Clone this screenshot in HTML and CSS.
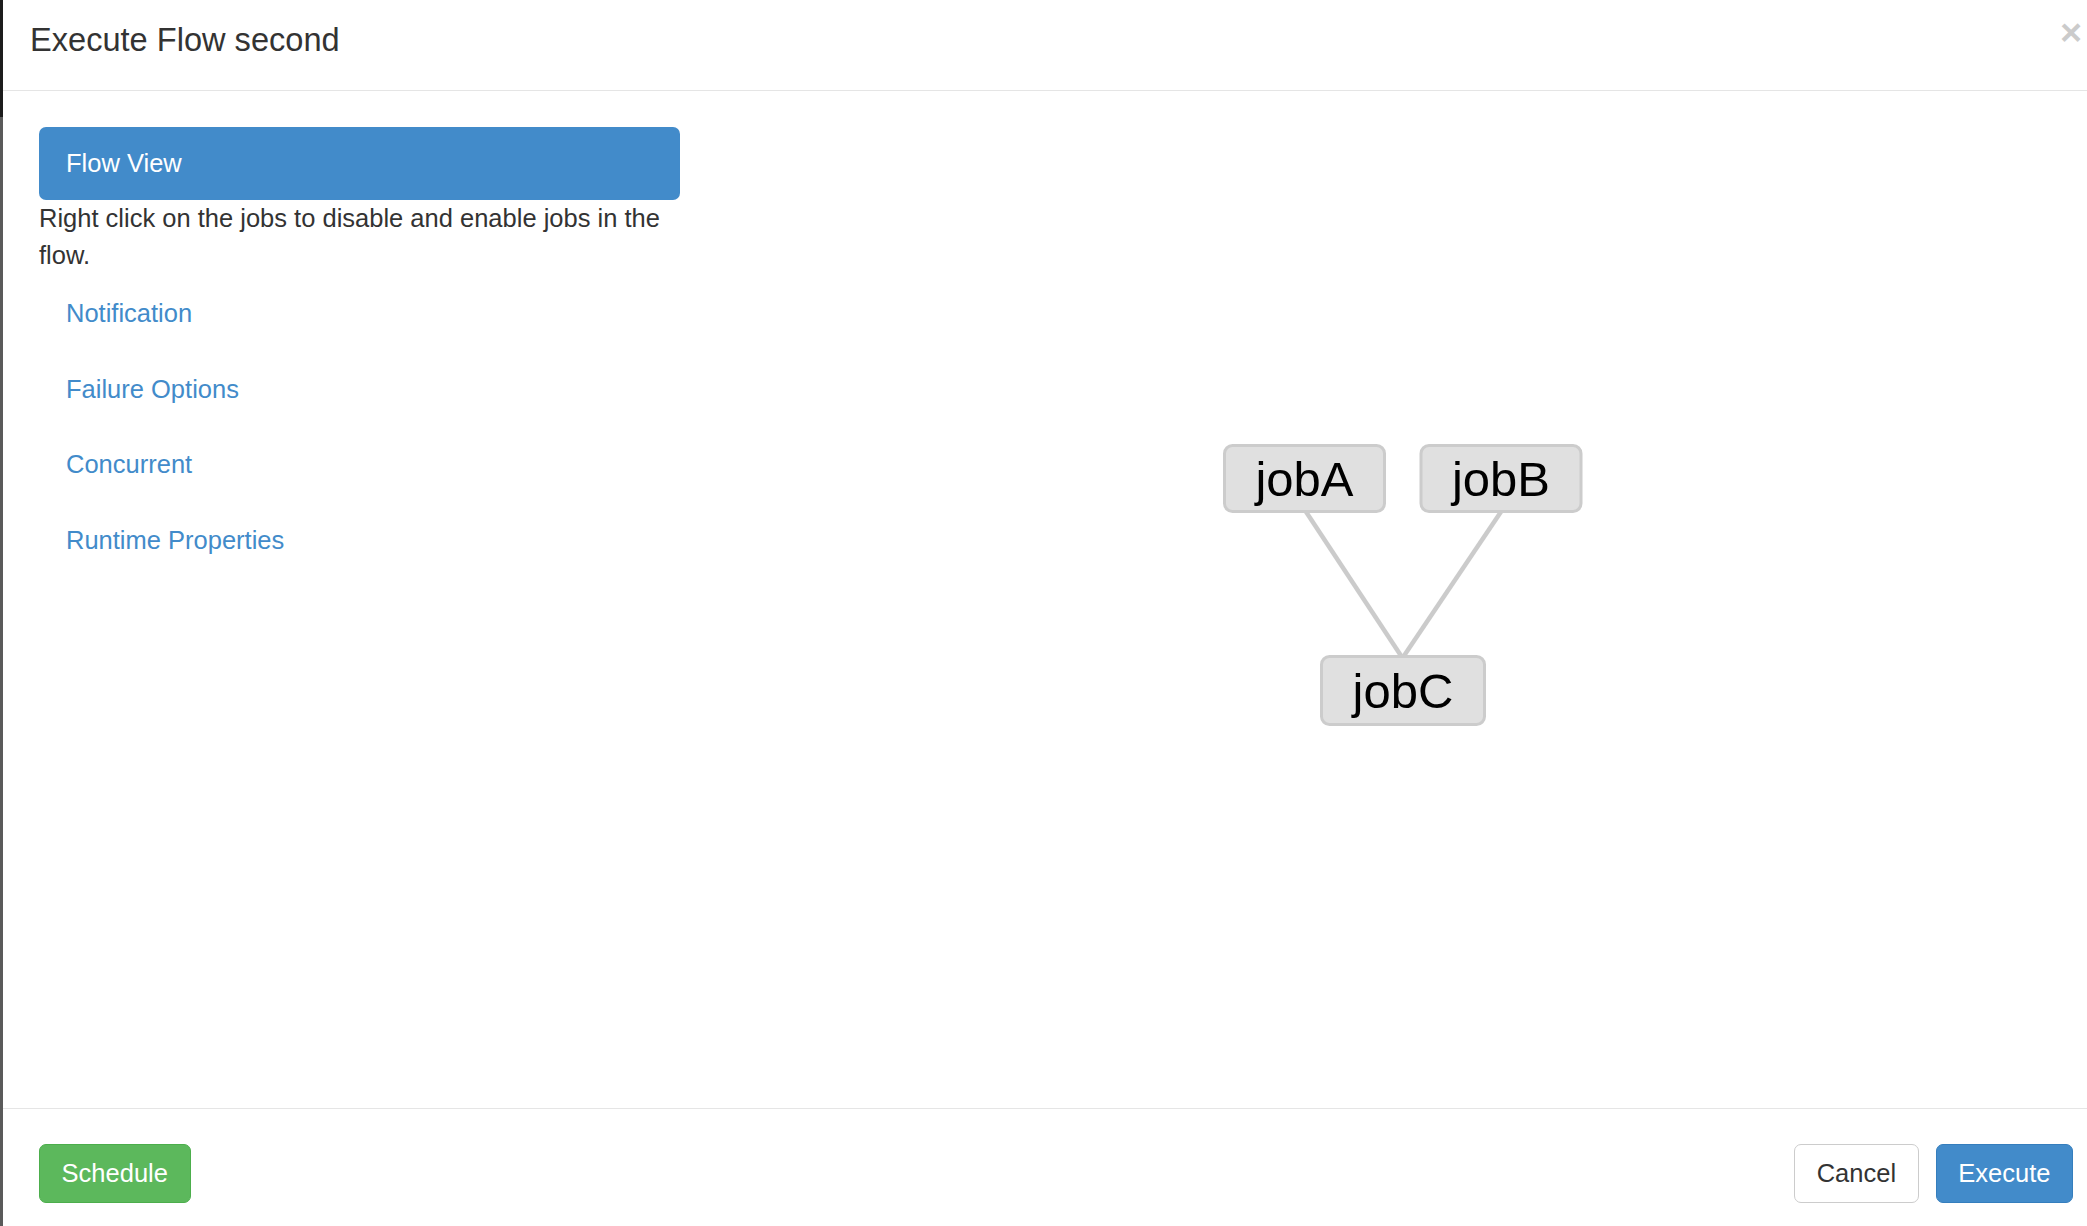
FILE: index.html
```html
<!DOCTYPE html>
<html lang="en">
<head>
<meta charset="utf-8">
<title>Execute Flow second</title>
<link rel="stylesheet" href="styles.css">
</head>
<body>
<div class="page">
  <div class="backdrop-edge"><div class="edge-top"></div></div>
  <div class="modal">
    <div class="modal-header">
      <h4 class="modal-title">Execute Flow second</h4>
      <button class="close" type="button">&times;</button>
    </div>
    <div class="modal-body">
      <div class="sidebar">
        <ul class="nav-pills">
          <li class="active">
            <a href="#">Flow View</a>
            <div class="menu-hint">Right click on the jobs to disable and enable jobs in the flow.</div>
          </li>
          <li><a href="#">Notification</a></li>
          <li><a href="#">Failure Options</a></li>
          <li><a href="#">Concurrent</a></li>
          <li><a href="#">Runtime Properties</a></li>
        </ul>
      </div>
      <div class="graph">
        <svg class="graph-svg" width="1338" height="945" viewBox="0 0 1338 945">
          <g class="edges">
            <line x1="571.5" y1="384" x2="668.5" y2="531"/>
            <line x1="767.5" y1="384" x2="668.5" y2="531"/>
          </g>
          <g class="node">
            <rect x="490.5" y="318.5" width="160" height="66" rx="8" ry="8"/>
            <text x="570.5" y="369">jobA</text>
          </g>
          <g class="node">
            <rect x="687" y="318.5" width="160" height="66" rx="8" ry="8"/>
            <text x="767" y="369">jobB</text>
          </g>
          <g class="node">
            <rect x="587.5" y="529.5" width="163" height="68" rx="8" ry="8"/>
            <text x="669" y="581">jobC</text>
          </g>
        </svg>
      </div>
    </div>
    <div class="modal-footer">
      <button class="btn btn-success" type="button">Schedule</button>
      <div class="footer-right">
        <button class="btn btn-default" type="button">Cancel</button>
        <button class="btn btn-primary" type="button">Execute</button>
      </div>
    </div>
  </div>
</div>
</body>
</html>
```

FILE: styles.css
```css
html, body {
  margin: 0;
  padding: 0;
  background: #ffffff;
  overflow: hidden;
}

body {
  font-family: "Liberation Sans", Arial, Helvetica, sans-serif;
  font-size: 25.5px;
  line-height: 36.4px;
  color: #333333;
}

.page {
  display: flex;
  align-items: flex-start;
  width: 2087px;
  height: 1226px;
  overflow: hidden;
}

.backdrop-edge {
  flex: 0 0 3px;
  width: 3px;
  height: 1226px;
  background: #5a5a5a;
}

.edge-top {
  height: 117px;
  background: #1c1c1c;
}

.modal {
  flex: 0 0 2106px;
  width: 2106px;
  background: #ffffff;
}

/* header */
.modal-header {
  display: flex;
  align-items: flex-start;
  padding: 16.5px 27px 26.5px 27px;
  border-bottom: 1px solid #e5e5e5;
}

.modal-title {
  margin: 0;
  flex: 1 1 auto;
  font-size: 32.6px;
  font-weight: normal;
  line-height: 46.6px;
  color: #333333;
}

.close {
  margin-top: -3px;
  padding: 0;
  border: 0;
  background: transparent;
  font-family: "Liberation Sans", Arial, sans-serif;
  font-size: 37.8px;
  font-weight: bold;
  line-height: 1;
  color: #000000;
  opacity: 0.2;
}

/* body */
.modal-body {
  display: flex;
  padding: 36px;
}

.sidebar {
  flex: 0 0 641px;
  width: 641px;
}

.nav-pills {
  list-style: none;
  margin: 0;
  padding: 0;
}

.nav-pills li + li {
  margin-top: 3.3px;
}

.nav-pills a {
  display: block;
  padding: 18px 27px;
  border-radius: 7px;
  color: #428bca;
  text-decoration: none;
}

.nav-pills li.active a {
  padding-top: 18.7px;
  padding-bottom: 18.7px;
  background: #428bca;
  color: #ffffff;
}

.menu-hint {
  padding-bottom: 0.5px;
  color: #333333;
}

.graph {
  flex: 0 0 1338px;
  margin-left: 54px;
  height: 945px;
}

.graph-svg {
  display: block;
}

.edges line {
  stroke: #cbcbcb;
  stroke-width: 4.5;
}

.node rect {
  fill: #e0e0e0;
  stroke: #cccccc;
  stroke-width: 3;
}

.node text {
  font-family: "Liberation Sans", Arial, sans-serif;
  font-size: 49px;
  fill: #000000;
  text-anchor: middle;
}

/* footer */
.modal-footer {
  display: flex;
  justify-content: space-between;
  align-items: flex-start;
  padding: 35px 36px 35px 36px;
  border-top: 1px solid #e5e5e5;
}

.footer-right {
  display: flex;
  gap: 17px;
}

.btn {
  display: inline-block;
  margin: 0;
  padding: 10.3px 21.6px;
  border: 1px solid transparent;
  border-radius: 7px;
  font-family: "Liberation Sans", Arial, sans-serif;
  font-size: 25.5px;
  line-height: 36.4px;
  cursor: pointer;
}

.btn-success {
  background: #5cb85c;
  border-color: #4cae4c;
  color: #ffffff;
}

.btn-default {
  background: #ffffff;
  border-color: #cccccc;
  color: #333333;
}

.btn-primary {
  background: #428bca;
  border-color: #357ebd;
  color: #ffffff;
}
```
